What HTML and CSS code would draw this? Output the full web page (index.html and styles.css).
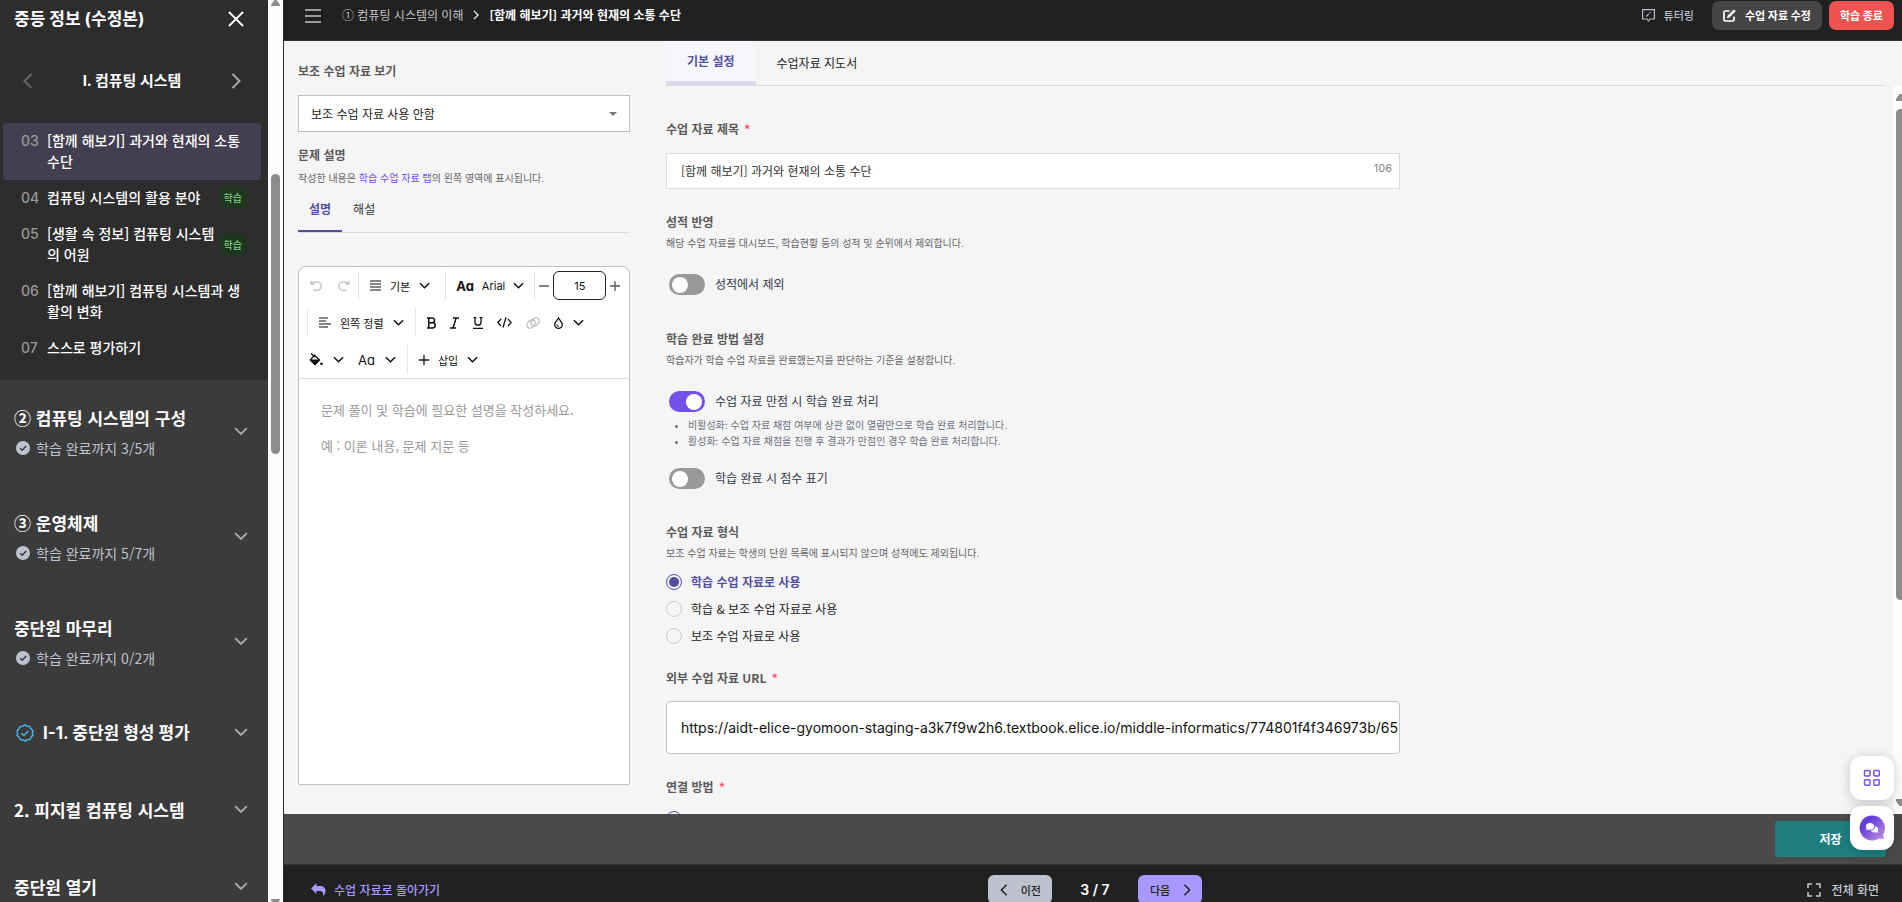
FILE: index.html
```html
<!DOCTYPE html>
<html lang="ko">
<head>
    <meta charset="UTF-8">
    <meta name="viewport" content="width=device-width, initial-scale=1.0">
    <title>중등 정보 (수정본)</title>
    <link rel="stylesheet" href="styles.css">
</head>
<body>
    <!-- Shared icons -->
    <svg class="sprite" aria-hidden="true">
        <symbol id="chevron-down" viewBox="0 0 12 12"><path d="M1 3.5l5 5 5-5" fill="none" stroke="currentColor" stroke-width="1.6"/></symbol>
        <symbol id="chevron-left" viewBox="0 0 10 16"><path d="M8.5 1L1.5 8l7 7" fill="none" stroke="currentColor" stroke-width="2"/></symbol>
        <symbol id="chevron-right" viewBox="0 0 10 16"><path d="M1.5 1l7 7-7 7" fill="none" stroke="currentColor" stroke-width="2"/></symbol>
        <symbol id="check-circle" viewBox="0 0 14 14"><circle cx="7" cy="7" r="7" fill="currentColor"/><path d="M4 7.2l2.2 2L10.2 5" fill="none" stroke="#3b3b3b" stroke-width="1.5"/></symbol>
        <symbol id="plus" viewBox="0 0 10 10"><path d="M5 0v10M0 5h10" stroke="currentColor" stroke-width="1.3"/></symbol>
    </svg>

    <aside class="sidebar">
        <div class="sidebar-content">
            <div class="lesson-panel">
                <div class="sidebar-header">
                    <h1>중등 정보 (수정본)</h1>
                    <button class="icon-btn" aria-label="닫기">
                        <svg width="16" height="16" viewBox="0 0 16 16"><path d="M1 1l14 14M15 1L1 15" stroke="currentColor" stroke-width="1.8"/></svg>
                    </button>
                </div>
                <div class="chapter-nav">
                    <button class="icon-btn dim" aria-label="이전 단원"><svg width="10" height="16"><use href="#chevron-left"/></svg></button>
                    <h2>I. 컴퓨팅 시스템</h2>
                    <button class="icon-btn muted" aria-label="다음 단원"><svg width="10" height="16"><use href="#chevron-right"/></svg></button>
                </div>
                <ul class="lesson-list">
                    <li><a class="lesson active" href="#"><span class="lesson-no">03</span><span class="lesson-name">[함께 해보기] 과거와 현재의 소통 수단</span></a></li>
                    <li><a class="lesson" href="#"><span class="lesson-no">04</span><span class="lesson-name">컴퓨팅 시스템의 활용 분야</span><span class="badge">학습</span></a></li>
                    <li><a class="lesson" href="#"><span class="lesson-no">05</span><span class="lesson-name">[생활 속 정보] 컴퓨팅 시스템의 어원</span><span class="badge">학습</span></a></li>
                    <li><a class="lesson" href="#"><span class="lesson-no">06</span><span class="lesson-name">[함께 해보기] 컴퓨팅 시스템과 생활의 변화</span></a></li>
                    <li><a class="lesson" href="#"><span class="lesson-no">07</span><span class="lesson-name">스스로 평가하기</span></a></li>
                </ul>
            </div>

            <button class="section">
                <span class="section-text">
                    <span class="section-title">② 컴퓨팅 시스템의 구성</span>
                    <span class="section-progress"><svg width="14" height="14"><use href="#check-circle"/></svg>학습 완료까지 3/5개</span>
                </span>
                <svg width="14" height="14"><use href="#chevron-down"/></svg>
            </button>
            <button class="section">
                <span class="section-text">
                    <span class="section-title">③ 운영체제</span>
                    <span class="section-progress"><svg width="14" height="14"><use href="#check-circle"/></svg>학습 완료까지 5/7개</span>
                </span>
                <svg width="14" height="14"><use href="#chevron-down"/></svg>
            </button>
            <button class="section">
                <span class="section-text">
                    <span class="section-title">중단원 마무리</span>
                    <span class="section-progress"><svg width="14" height="14"><use href="#check-circle"/></svg>학습 완료까지 0/2개</span>
                </span>
                <svg width="14" height="14"><use href="#chevron-down"/></svg>
            </button>
            <button class="section">
                <span class="section-text">
                    <span class="section-title with-icon">
                        <svg width="18" height="18" viewBox="0 0 18 18" fill="none" stroke="#45b4e8" stroke-width="1.5" stroke-linejoin="round"><path d="M9 1l2.3 1.2 2.6.3 1.1 2.3 1.9 1.8-.5 2.4.5 2.4-1.9 1.8-1.1 2.3-2.6.3L9 17l-2.3-1.2-2.6-.3L3 13.200l-1.900-1.800.5-2.400-.5-2.400L3 4.800l1.100-2.300 2.600-.3z"/><path d="M5.500 9.200l2.400 2.200 4.400-4.500"/></svg>
                        I-1. 중단원 형성 평가
                    </span>
                </span>
                <svg width="14" height="14"><use href="#chevron-down"/></svg>
            </button>
            <button class="section">
                <span class="section-text"><span class="section-title">2. 피지컬 컴퓨팅 시스템</span></span>
                <svg width="14" height="14"><use href="#chevron-down"/></svg>
            </button>
            <button class="section">
                <span class="section-text"><span class="section-title">중단원 열기</span></span>
                <svg width="14" height="14"><use href="#chevron-down"/></svg>
            </button>
        </div>
        <div class="scrollbar sidebar-scroll" aria-hidden="true">
            <svg width="9" height="6" viewBox="0 0 9 6"><path d="M3.500 0h2L9 5v1H0V5z" fill="#8c8c8c"/></svg>
            <div class="thumb"></div>
            <svg width="9" height="3" viewBox="0 0 9 3"><path d="M0 0h9v1L7.500 3h-6L0 1z" fill="#8c8c8c"/></svg>
        </div>
    </aside>

    <div class="page">
        <header class="topbar">
            <button class="icon-btn menu-btn" aria-label="메뉴">
                <svg width="16" height="14" viewBox="0 0 16 14"><path d="M0 1h16M0 7h16M0 13h16" stroke="currentColor" stroke-width="2"/></svg>
            </button>
            <nav class="breadcrumb">
                <a href="#">① 컴퓨팅 시스템의 이해</a>
                <svg width="6" height="10"><use href="#chevron-right"/></svg>
                <strong>[함께 해보기] 과거와 현재의 소통 수단</strong>
            </nav>
            <div class="topbar-actions">
                <button class="btn btn-text">
                    <svg width="13" height="13" viewBox="0 0 13 13" fill="none" stroke="currentColor" stroke-width="1.200"><path d="M.6.6h11.800v9.400H8l-1.500 2L5 10H.6z"/><path d="M4.300 7.500l4.200-4.300" stroke-dasharray="3.600 1.200"/></svg>
                    튜터링
                </button>
                <button class="btn btn-edit">
                    <svg width="13" height="13" viewBox="0 0 13 13"><path d="M6.500 2H2.300A1.300 1.300 0 0 0 1 3.300v7.400A1.300 1.300 0 0 0 2.300 12h7.400a1.300 1.300 0 0 0 1.300-1.300V7.500" fill="none" stroke="currentColor" stroke-width="1.700"/><path d="M4 9.200l.5-2.500L10.300.900a1 1 0 0 1 1.400 0l.5.5a1 1 0 0 1 0 1.400L6.400 8.600z" fill="currentColor"/></svg>
                    수업 자료 수정
                </button>
                <button class="btn btn-exit">학습 종료</button>
            </div>
        </header>

        <main class="content">
            <section class="left-pane">
                <label class="field-label" for="aux">보조 수업 자료 보기</label>
                <div class="select-wrap">
                    <select id="aux"><option>보조 수업 자료 사용 안함</option></select>
                </div>
                <label class="field-label" for="desc">문제 설명</label>
                <p class="hint">작성한 내용은 <a href="#">학습 수업 자료 탭</a>의 왼쪽 영역에 표시됩니다.</p>
                <div class="sub-tabs">
                    <button class="sub-tab active">설명</button>
                    <button class="sub-tab">해설</button>
                </div>

                <div class="editor">
                    <div class="toolbar">
                        <div class="toolbar-row">
                            <button class="tool wide disabled" aria-label="실행 취소"><svg width="12" height="12" viewBox="0 0 12 12" fill="none" stroke="currentColor" stroke-width="1.200"><path d="M1 .8v3.400h3.400M1.200 4C3 2 5 1.800 7 1.900a4 4 0 0 1 0 8.400H3.500"/></svg></button>
                            <button class="tool wide disabled" aria-label="다시 실행"><svg width="12" height="12" viewBox="0 0 12 12" fill="none" stroke="currentColor" stroke-width="1.200"><path d="M11 .8v3.400H7.600M10.800 4C9 2 7 1.800 5 1.900a4 4 0 0 0 0 8.400h3.500"/></svg></button>
                            <span class="divider"></span>
                            <button class="tool-select"><svg width="11" height="11" viewBox="0 0 11 11"><path d="M0 1h11M0 4h11M0 7h11M0 10h11" stroke="currentColor" stroke-width="1.200"/></svg>기본<svg width="11" height="11"><use href="#chevron-down"/></svg></button>
                            <span class="divider gap-left"></span>
                            <button class="tool-select font-select"><b class="glyph">Aa</b>Arial<svg width="11" height="11"><use href="#chevron-down"/></svg></button>
                            <span class="divider"></span>
                            <button class="tool size-btn" aria-label="작게"><svg width="10" height="10" viewBox="0 0 10 10"><path d="M0 5h10" stroke="currentColor" stroke-width="1.300"/></svg></button>
                            <input class="size-input" type="text" value="15" aria-label="글자 크기">
                            <button class="tool size-btn" aria-label="크게"><svg width="10" height="10"><use href="#plus"/></svg></button>
                        </div>
                        <div class="toolbar-row indent">
                            <span class="divider"></span>
                            <button class="tool-select align"><svg width="12" height="11" viewBox="0 0 12 11"><path d="M0 1h9M0 4h7M0 7h12M0 10h9" stroke="currentColor" stroke-width="1.200"/></svg>왼쪽 정렬<svg width="11" height="11"><use href="#chevron-down"/></svg></button>
                            <span class="divider gap-right"></span>
                            <button class="tool" aria-label="굵게"><svg width="9" height="12" viewBox="0 0 9 12" fill="none" stroke="currentColor" stroke-width="1.500"><path d="M0 1h5.200a2.300 2.300 0 0 1 0 4.700H1.800M0 11h5.600a2.600 2.600 0 0 0 0-5.300M1.800 1v10"/></svg></button>
                            <button class="tool" aria-label="기울임"><svg width="9" height="12" viewBox="0 0 9 12" fill="none" stroke="currentColor" stroke-width="1.400"><path d="M3 1h6M0 11h6M6.200 1L3 11"/></svg></button>
                            <button class="tool" aria-label="밑줄"><svg width="10" height="12" viewBox="0 0 10 12" fill="none" stroke="currentColor" stroke-width="1.300"><path d="M.5.700h3M6.500.700h3M2 .700v4.500a3 3 0 0 0 6 0V.700M0 11.300h10"/></svg></button>
                            <button class="tool" aria-label="코드"><svg width="15" height="11" viewBox="0 0 15 11" fill="none" stroke="currentColor" stroke-width="1.300"><path d="M4 2L.8 5.500 4 9M11 2l3.200 3.500L11 9M9 .500l-3 10"/></svg></button>
                            <button class="tool disabled" aria-label="링크"><svg width="14" height="12" viewBox="0 0 14 12" fill="none" stroke="currentColor" stroke-width="1.300"><ellipse cx="5" cy="7" rx="4.700" ry="3.400" transform="rotate(-45 5 7)"/><ellipse cx="9" cy="5" rx="4.700" ry="3.400" transform="rotate(-45 9 5)"/></svg></button>
                            <button class="tool pair" aria-label="글자 색"><svg width="9" height="12" viewBox="0 0 9 12" fill="none" stroke="currentColor" stroke-width="1.300"><path d="M4.500 1C3 3.500.700 5.300.700 7.600a3.800 3.800 0 0 0 7.600 0C8.300 5.300 6 3.500 4.500 1z"/><path d="M2.800 7.500a2 2 0 0 0 2 1.900" stroke-width="1"/></svg><svg width="11" height="11"><use href="#chevron-down"/></svg></button>
                        </div>
                        <div class="toolbar-row">
                            <button class="tool pair" aria-label="배경 색"><svg width="14" height="13" viewBox="0 0 14 13"><path d="M2 .500l4 3.500M5.500 2.200L10.500 7 6 11.500 1.200 7z" fill="none" stroke="currentColor" stroke-width="1.300"/><path d="M.800 6.500h10.400L6.800 11.600a1.200 1.200 0 0 1-1.700 0z" fill="currentColor"/><circle cx="12.500" cy="10.800" r="1.300" fill="currentColor"/></svg><svg width="11" height="11"><use href="#chevron-down"/></svg></button>
                            <button class="tool pair" aria-label="대소문자"><span class="glyph">Aa</span><svg width="11" height="11"><use href="#chevron-down"/></svg></button>
                            <span class="divider gap-left"></span>
                            <button class="tool-select"><svg width="10" height="10"><use href="#plus"/></svg>삽입<svg width="11" height="11"><use href="#chevron-down"/></svg></button>
                        </div>
                    </div>
                    <textarea id="desc" placeholder="문제 풀이 및 학습에 필요한 설명을 작성하세요.&#10;예 : 이론 내용, 문제 지문 등"></textarea>
                </div>
            </section>

            <section class="right-pane">
                <div class="tabs">
                    <button class="tab active">기본 설정</button>
                    <button class="tab">수업자료 지도서</button>
                </div>
                <div class="form-scroll">
                    <form class="form">
                        <div class="group">
                            <label class="field-label" for="title">수업 자료 제목 <span class="required">*</span></label>
                            <div class="title-box">
                                <input id="title" type="text" value="[함께 해보기] 과거와 현재의 소통 수단">
                                <span class="counter">106</span>
                            </div>
                        </div>

                        <div class="group">
                            <h3 class="field-label">성적 반영</h3>
                            <p class="hint">해당 수업 자료를 대시보드, 학습현황 등의 성적 및 순위에서 제외합니다.</p>
                            <label class="switch"><input type="checkbox">성적에서 제외</label>
                        </div>

                        <div class="group">
                            <h3 class="field-label">학습 완료 방법 설정</h3>
                            <p class="hint">학습자가 학습 수업 자료를 완료했는지를 판단하는 기준을 설정합니다.</p>
                            <label class="switch"><input type="checkbox" checked>수업 자료 만점 시 학습 완료 처리</label>
                            <ul class="notes">
                                <li>비활성화: 수업 자료 채점 여부에 상관 없이 열람만으로 학습 완료 처리합니다.</li>
                                <li>활성화: 수업 자료 채점을 진행 후 결과가 만점인 경우 학습 완료 처리합니다.</li>
                            </ul>
                            <label class="switch last">
                                <input type="checkbox">학습 완료 시 점수 표기
                            </label>
                        </div>

                        <div class="group">
                            <h3 class="field-label">수업 자료 형식</h3>
                            <p class="hint">보조 수업 자료는 학생의 단원 목록에 표시되지 않으며 성적에도 제외됩니다.</p>
                            <div class="radios">
                                <label class="radio"><input type="radio" name="kind" checked><span>학습 수업 자료로 사용</span></label>
                                <label class="radio"><input type="radio" name="kind"><span>학습 &amp; 보조 수업 자료로 사용</span></label>
                                <label class="radio"><input type="radio" name="kind"><span>보조 수업 자료로 사용</span></label>
                            </div>
                        </div>

                        <div class="group">
                            <label class="field-label" for="url">외부 수업 자료 URL <span class="required">*</span></label>
                            <input class="url-input" id="url" type="text" value="https://aidt-elice-gyomoon-staging-a3k7f9w2h6.textbook.elice.io/middle-informatics/774801f4f346973b/65">
                        </div>

                        <div class="group">
                            <h3 class="field-label">연결 방법 <span class="required">*</span></h3>
                            <div class="radios link-radios">
                                <label class="radio"><input type="radio" name="link" checked aria-label="연결 방법"></label>
                            </div>
                        </div>
                    </form>
                    <div class="scrollbar form-bar" aria-hidden="true">
                        <svg width="9" height="7" viewBox="0 0 9 7"><path d="M3.500 0h2L9 5v2H0V5z" fill="#8c8c8c"/></svg>
                        <div class="thumb"></div>
                        <svg width="9" height="7" viewBox="0 0 9 7"><path d="M0 0h9v2L5.500 7h-2L0 2z" fill="#8c8c8c"/></svg>
                    </div>
                </div>
            </section>
        </main>

        <div class="save-bar">
            <button class="btn-save">저장</button>
        </div>

        <footer class="bottombar">
            <a class="back-link" href="#">
                <svg width="15" height="13" viewBox="0 0 15 13"><path d="M5.500 0v3H9c3.500 0 5.500 2 5.500 5 0 2-.8 3.800-2.500 5 .6-3.500-.5-5-3-5H5.500v3L0 5.500z" fill="currentColor"/></svg>
                수업 자료로 돌아가기
            </a>
            <div class="pager">
                <button class="pager-btn prev"><svg width="8" height="12"><use href="#chevron-left"/></svg>이전</button>
                <span class="page-no">3 / 7</span>
                <button class="pager-btn next">다음<svg width="8" height="12"><use href="#chevron-right"/></svg></button>
            </div>
            <button class="fullscreen">
                <svg width="14" height="14" viewBox="0 0 14 14" fill="none" stroke="currentColor" stroke-width="1.500"><path d="M1 5V1h4M9 1h4v4M13 9v4H9M5 13H1V9"/></svg>
                전체 화면
            </button>
        </footer>
    </div>

    <div class="floating">
        <button aria-label="앱 목록">
            <svg width="18" height="18" viewBox="0 0 18 18" fill="none" stroke="#7453e8" stroke-width="1.500"><rect x="1.500" y="1.500" width="5.500" height="5.500" rx="1"/><rect x="10.800" y="1.500" width="5.500" height="5.500" rx="1"/><rect x="1.500" y="10.800" width="5.500" height="5.500" rx="1"/><rect x="10.800" y="10.800" width="5.500" height="5.500" rx="1"/></svg>
        </button>
        <button aria-label="채팅">
            <svg width="26" height="26" viewBox="0 0 26 26">
                <defs><linearGradient id="chat" x1="0" y1="0" x2="1" y2="1"><stop offset=".3" stop-color="#6440dc"/><stop offset="1" stop-color="#c793e0"/></linearGradient></defs>
                <path d="M13 .500a12.500 12.500 0 1 0 7 22.900l5 .600-.900-4.600A12.500 12.500 0 0 0 13 .500z" fill="url(#chat)"/>
                <path d="M11 8c-2.500 0-4.200 1.500-4.200 3.500 0 .9.300 1.600.9 2.200l-.7 1.500 2.200-.6c3 .9 6-.6 6-3.100C15.200 9.500 13.500 8 11 8z" fill="#fff"/>
                <path d="M16 11.500c0 2.300-1.800 3.900-4.300 4.100 1 1.700 3.300 2.300 5.300 1.700l2.200.6-.7-1.500c1.800-1.900.6-4.800-2.500-4.900z" fill="#fff"/>
            </svg>
        </button>
    </div>
</body>
</html>
```
FILE: styles.css
```css
:root {
    --purple: #524fa1;
    --violet: #7350e8;
    --dark: #212121;
    --panel: #2d2d2d;
    --page-bg: #f5f5f5;
    --label: #5a5a5a;
    --font-korean: "Noto Sans CJK KR", sans-serif;
    --font-latin: Inter, "Noto Sans CJK KR", sans-serif;
}

* {
    box-sizing: border-box;
    margin: 0;
    padding: 0;
}

body {
    font-family: var(--font-korean);
    font-size: 12px;
    line-height: 20px;
    height: 100vh;
    display: flex;
    overflow: hidden;
    background-color: var(--page-bg);
}

button,
input,
select,
textarea {
    font: inherit;
    color: inherit;
}

button {
    display: flex;
    align-items: center;
    border: none;
    background: none;
    white-space: nowrap;
    cursor: pointer;
}

a {
    text-decoration: none;
}

svg {
    display: block;
    flex-shrink: 0;
}

.sprite {
    position: absolute;
    width: 0;
    height: 0;
}

/* Sidebar */
.sidebar {
    display: flex;
    flex: 0 0 284px;
    overflow: hidden;
    background-color: #3b3b3b;
    border-right: 1px solid var(--panel);
    color: #ffffff;
}

.sidebar-content {
    flex: 1;
}

.lesson-panel {
    background-color: var(--panel);
    padding-bottom: 14px;
}

.sidebar-header {
    display: flex;
    justify-content: space-between;
    align-items: center;
    height: 38px;
    padding: 0 24px 0 14px;
}

.sidebar-header h1 {
    font-family: var(--font-latin);
    font-size: 17px;
    font-weight: 700;
}

.chapter-nav {
    display: flex;
    justify-content: space-between;
    align-items: center;
    height: 85px;
    padding: 0 27px 0 23px;
}

.chapter-nav h2 {
    font-family: var(--font-latin);
    font-size: 15px;
    font-weight: 700;
}

.icon-btn.dim {
    color: #666666;
}

.icon-btn.muted {
    color: #aaaaaa;
}

.lesson-list {
    list-style: none;
    padding: 0 7px 0 3px;
}

.lesson {
    display: flex;
    align-items: center;
    padding: 7px 14px 8px 18px;
    border-radius: 4px;
    color: #ffffff;
    font-size: 14px;
    font-weight: 500;
    line-height: 21px;
}

.lesson.active {
    background-color: #433f50;
}

.lesson-no {
    flex: 0 0 26px;
    align-self: flex-start;
    color: #999999;
    font-family: var(--font-latin);
}

.lesson-name {
    flex: 1;
}

.badge {
    padding: 0 5px;
    border-radius: 3px;
    background-color: #1e361f;
    color: #7fd084;
    font-size: 10px;
    font-weight: 500;
}

.section {
    width: 100%;
    justify-content: space-between;
    padding: 25px 20px 25px 14px;
    border-bottom: 1px solid #383838;
    color: #aaaaaa;
    text-align: left;
}

.section > svg {
    margin-bottom: 2px;
}

.section-title {
    display: block;
    color: #ffffff;
    font-size: 17px;
    font-weight: 700;
    line-height: 26px;
}

.section-title.with-icon {
    display: flex;
    align-items: center;
    gap: 9px;
    padding-left: 2px;
    font-family: var(--font-latin);
}

.section-progress {
    display: flex;
    align-items: center;
    gap: 6px;
    padding: 6px 0 0 2px;
    color: #bdc2ce;
    font-size: 14px;
    line-height: 22px;
}

/* Scrollbars */
.scrollbar {
    display: flex;
    flex-direction: column;
    align-items: center;
    background-color: #fcfcfc;
}

.scrollbar .thumb {
    width: 9px;
    border-radius: 5px;
    background-color: #8c8c8c;
}

.sidebar-scroll {
    width: 15px;
    justify-content: space-between;
}

.sidebar-scroll .thumb {
    height: 31%;
    margin-bottom: 277px;
}

/* Page */
.page {
    flex: 1;
    min-width: 0;
    display: flex;
    flex-direction: column;
}

.topbar {
    display: flex;
    align-items: flex-start;
    flex: 0 0 41px;
    padding: 1px 8px 0 21px;
    background-color: var(--dark);
    border-bottom: 1px solid #333333;
    color: #ffffff;
}

.menu-btn {
    height: 29px;
    color: #999999;
}

.breadcrumb {
    display: flex;
    align-items: center;
    gap: 10px;
    height: 27px;
    margin-left: 21px;
}

.breadcrumb a {
    color: #c4c4c4;
}

.breadcrumb strong {
    font-weight: 700;
}

.topbar-actions {
    display: flex;
    gap: 7px;
    margin-left: auto;
}

.btn {
    height: 29px;
    gap: 9px;
    padding: 0 11px;
    border-radius: 7px;
    font-family: var(--font-latin);
    font-size: 11px;
    font-weight: 700;
}

.btn-text {
    color: #b8bfc8;
    font-weight: 500;
}

.btn-edit {
    background-color: #454545;
}

.btn-exit {
    background-color: #ef5350;
}

.content {
    flex: 1;
    min-height: 0;
    display: flex;
    gap: 36px;
    padding-left: 14px;
    overflow: hidden;
}

/* Left pane */
.left-pane {
    display: flex;
    flex-direction: column;
    flex: 0 0 332px;
    padding: 20px 0 29px;
}

.field-label {
    display: block;
    color: var(--label);
    font-size: 12px;
    font-weight: 700;
    line-height: 20px;
}

.hint {
    margin-top: 1px;
    color: #666666;
    font-family: var(--font-latin);
    font-size: 10px;
    line-height: 20px;
}

.hint a {
    color: var(--violet);
}

.select-wrap {
    position: relative;
    margin: 14px 0 13px;
}

.select-wrap::after {
    content: "";
    position: absolute;
    right: 13px;
    top: 17px;
    border: 4px solid transparent;
    border-top-color: #777777;
    border-bottom: 0;
}

select {
    width: 100%;
    height: 37px;
    padding: 0 12px;
    border: 1px solid #c0c0c0;
    background-color: #ffffff;
    color: #222222;
    appearance: none;
}

.left-pane .hint {
    margin-top: 3px;
}

.sub-tabs {
    display: flex;
    margin-bottom: 33px;
    border-bottom: 1px solid #dddddd;
}

.sub-tab {
    height: 44px;
    padding: 0 11px;
    border-bottom: 2px solid transparent;
    color: #333333;
}

.sub-tab.active {
    border-color: var(--purple);
    color: var(--purple);
    font-weight: 700;
}

.editor {
    flex: 1;
    display: flex;
    flex-direction: column;
    overflow: hidden;
    border: 1px solid #c0c0c0;
    border-radius: 8px 8px 2px 2px;
    background-color: #ffffff;
}

.toolbar {
    border-bottom: 1px solid #dddddd;
    color: #111111;
    font-size: 11px;
}

.toolbar-row {
    display: flex;
    align-items: center;
    height: 37px;
    padding: 0 3px;
}

.toolbar-row.indent {
    padding-left: 8px;
}

.divider {
    width: 1px;
    height: 29px;
    background-color: #e6e6e6;
}

.gap-right {
    margin-right: 4px;
}

.gap-left {
    margin-left: 4px;
}

.tool {
    height: 29px;
    padding: 0 7px;
}

.tool.wide {
    padding: 0 8px;
}

.tool.pair {
    gap: 10px;
}

.tool.disabled {
    color: #bbbbbb;
}

.tool-select {
    height: 29px;
    gap: 9px;
    padding: 0 11px;
}

.font-select {
    gap: 8px;
    padding: 0 10px;
    font-family: var(--font-latin);
}

.glyph {
    font-family: var(--font-latin);
    font-size: 13px;
    font-feature-settings: "cv11";
}

.size-btn {
    padding: 0 4px;
    color: #555555;
}

.size-input {
    width: 53px;
    height: 29px;
    border: 1px solid #222222;
    border-radius: 6px;
    font-family: var(--font-latin);
    text-align: center;
}

textarea {
    flex: 1;
    padding: 13px 22px;
    border: none;
    outline: none;
    resize: none;
    font-size: 13px;
    line-height: 36px;
}

textarea::placeholder {
    color: #999999;
}

/* Right pane */
.right-pane {
    flex: 1;
    min-width: 0;
    display: flex;
    flex-direction: column;
}

.tabs {
    display: flex;
    flex: 0 0 45px;
    margin-right: 16px;
    border-bottom: 1px solid #dddddd;
}

.tab {
    height: 44px;
    padding: 0 21px;
    color: #222222;
}

.tab.active {
    border-bottom: 4px solid #dcdaea;
    background-color: #f6f7fb;
    color: var(--purple);
    font-weight: 700;
}

.form-scroll {
    flex: 1;
    min-height: 0;
    display: flex;
    justify-content: space-between;
    overflow: hidden;
}

.form {
    flex: 1;
    max-width: 734px;
    padding-top: 33px;
}

.group {
    margin-bottom: 23px;
}

.required {
    margin-left: 2px;
    color: #ff4d6a;
}

.title-box {
    display: flex;
    height: 36px;
    margin-top: 14px;
    padding: 0 7px 0 14px;
    border: 1px solid #dddddd;
    background-color: #ffffff;
    color: #333333;
}

.title-box input {
    flex: 1;
    border: none;
    outline: none;
    background: none;
}

.counter {
    color: #888888;
    font-family: var(--font-latin);
    font-size: 11px;
    line-height: 28px;
}

.switch {
    display: flex;
    align-items: center;
    gap: 10px;
    margin: 19px 0 0 3px;
    color: #333a48;
    line-height: 24px;
}

.switch input {
    width: 36px;
    height: 21px;
    padding: 3px;
    border-radius: 11px;
    background-color: #999999;
    appearance: none;
}

.switch input::before {
    content: "";
    display: block;
    width: 16px;
    height: 16px;
    border-radius: 50%;
    background-color: #ffffff;
}

.switch input:checked {
    background-color: var(--violet);
}

.switch input:checked::before {
    margin-left: auto;
}

.switch.last {
    margin-top: 17px;
}

.group:has(.switch) {
    margin-bottom: 33px;
}

.group:has(.switch.last) {
    margin-bottom: 32px;
}

.notes {
    margin-top: 4px;
    padding-left: 22px;
    color: #6b7280;
    font-family: var(--font-latin);
    font-size: 10px;
    line-height: 16px;
}

.radios {
    margin-top: 5px;
}

.radios.link-radios {
    margin-top: 8px;
}

.radio {
    display: flex;
    align-items: center;
    gap: 9px;
    height: 27px;
    color: #222222;
}

.radio input {
    width: 16px;
    height: 16px;
    border: 1px solid #cccccc;
    border-radius: 50%;
    appearance: none;
}

.radio input:checked {
    padding: 2px;
    border-color: var(--purple);
    background: var(--purple) content-box;
}

.radio input:checked + span {
    color: var(--purple);
    font-weight: 700;
}

.group:has(.radios) {
    margin-bottom: 19px;
}

.url-input {
    width: 100%;
    height: 53px;
    margin-top: 13px;
    padding: 0 0 0 14px;
    border: 1px solid #c4c4c4;
    border-radius: 4px;
    background-color: #ffffff;
    color: #111111;
    font-family: var(--font-latin);
    font-size: 14px;
}

.form-bar {
    width: 9px;
    padding: 8px 0 8px 3px;
    align-items: flex-start;
    overflow: hidden;
}

.form-bar .thumb {
    height: 69%;
    margin: 8px 0 auto;
}

/* Bottom bars */
.save-bar {
    display: flex;
    justify-content: flex-end;
    align-items: center;
    flex: 0 0 50px;
    padding: 0 16px;
    background-color: #4a4a4a;
}

.btn-save {
    justify-content: center;
    width: 111px;
    height: 36px;
    border-radius: 3px;
    background-color: #1f7f80;
    color: #ffffff;
    font-weight: 700;
}

.bottombar {
    display: grid;
    grid-template-columns: 1fr auto 1fr;
    align-items: start;
    flex: 0 0 38px;
    padding: 10px 23px 0 27px;
    overflow: hidden;
    background-color: var(--dark);
    border-top: 1px solid #333333;
}

.back-link {
    display: flex;
    align-items: center;
    gap: 8px;
    height: 29px;
    color: #a898ff;
    font-weight: 500;
}

.pager {
    display: flex;
    align-items: center;
}

.pager-btn {
    justify-content: space-between;
    width: 64px;
    height: 29px;
    padding: 0 11px 0 12px;
    border-radius: 6px;
    color: #222222;
    font-size: 11px;
    font-weight: 500;
}

.pager-btn.prev {
    background-color: #bdc2ce;
}

.pager-btn.next {
    background-color: #a898ff;
}

.page-no {
    width: 86px;
    color: #ffffff;
    font-family: var(--font-latin);
    font-size: 14px;
    font-weight: 600;
    text-align: center;
}

.fullscreen {
    justify-self: end;
    gap: 10px;
    height: 29px;
    color: #c4c9d2;
    font-weight: 500;
}

/* Floating buttons over the page corner */
.floating {
    position: absolute;
    right: 8px;
    bottom: 52px;
    display: flex;
    flex-direction: column;
    gap: 6px;
}

.floating button {
    justify-content: center;
    width: 44px;
    height: 44px;
    border-radius: 12px;
    background-color: #ffffff;
    box-shadow: 0 2px 12px rgba(0, 0, 0, 0.2);
}
```
